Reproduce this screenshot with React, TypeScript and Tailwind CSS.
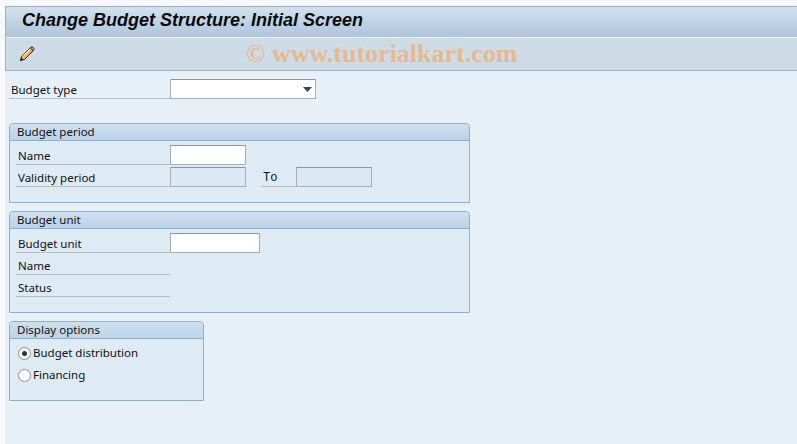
const ui = { fontFamily: '"Noto Sans", sans-serif' };

function Pencil() {
  return (
    <svg width="16" height="16" viewBox="0 0 16 16" className="block">
      <path d="M1.5 14.5 L2.6 10.4 L11.6 1.6 L14.4 4.4 L5.6 13.4 Z" fill="#f4b942" stroke="#1a1a1a" strokeWidth="1" strokeLinejoin="round" />
      <path d="M3.6 10.4 L12 2.4" stroke="#fff3c4" strokeWidth="1.2" />
      <path d="M11.2 2 L12.2 1 Q13 0.6 13.8 1.2 L14.9 2.3 Q15.4 3 14.9 3.8 L14 4.8 Z" fill="#d9808c" stroke="#1a1a1a" strokeWidth="0.8" />
      <path d="M1.5 14.5 L2.2 11.8 L4.2 13.8 Z" fill="#1a1a1a" />
    </svg>
  );
}

function Row({ label, width = "w-[154px]", children }: { label: string; width?: string; children?: React.ReactNode }) {
  return (
    <div className="flex h-[20px] mb-[2px] items-stretch">
      <div className={`${width} border-b border-[#b9bdc1] pl-[2px] text-[11.5px] leading-[22px] text-[#111] h-[20px]`}>{label}</div>
      {children}
    </div>
  );
}

function Field({ width, disabled }: { width: string; disabled?: boolean }) {
  return (
    <div className={`${width} h-[20px] border border-[#a9adb0] border-t-[#8f9496] rounded-[1px] ${disabled ? "bg-[#dce8f3]" : "bg-white"}`} />
  );
}

function Group({ title, width, height, children }: { title: string; width: string; height: string; children: React.ReactNode }) {
  return (
    <section className={`${width} ${height} border border-[#8fb0cb] rounded-t-[4px] bg-[#deeaf4] overflow-hidden flex flex-col`}>
      <div className="h-[17px] shrink-0 border-b border-[#8fb0cb] bg-gradient-to-b from-[#cfdfee] to-[#bcd3e8] pl-[7px] text-[11.5px] leading-[15px] text-[#111]">{title}</div>
      <div className="pt-[4px] pl-[6px]">{children}</div>
    </section>
  );
}

function Radio({ on, label }: { on?: boolean; label: string }) {
  return (
    <div className="flex h-[20px] mb-[2px] items-center">
      <div className="w-[13px] h-[13px] rounded-full border border-[#8e8f8f] bg-white flex items-center justify-center">
        {on && <div className="w-[5px] h-[5px] rounded-full bg-[#2c3040]" />}
      </div>
      <span className="ml-[2px] text-[11.5px] leading-[22px] text-[#111]">{label}</span>
    </div>
  );
}

export default function App() {
  return (
    <div className="w-[797px] h-[444px] overflow-hidden bg-[#f8f9fd] pt-[6px] pl-[5px] flex flex-col" style={ui}>
      <header className="h-[31px] shrink-0 border-t border-[#a1afc3] border-l bg-gradient-to-b from-[#d2e1ee] to-[#aec5dc] pl-[16px] text-[18px] leading-[26px] font-bold italic text-[#0a0a0a]" style={{ fontFamily: '"Liberation Sans", sans-serif' }}>
        Change Budget Structure: Initial Screen
      </header>
      <div className="h-[34px] shrink-0 border-t border-[#eef3f8] border-b border-l border-b-[#a3b3c6] border-l-[#a1afc3] bg-[#cddbe6] flex items-center">
        <div className="ml-[13px]"><Pencil /></div>
        <div className="ml-[211px] text-[26px] font-bold leading-[30px] text-[#e8b98c] whitespace-nowrap" style={{ fontFamily: '"Liberation Serif", serif' }}>
          © www.tutorialkart.com
        </div>
      </div>
      <main className="flex-1 bg-[#e8f0f7] pl-[4px] pt-[8px]">
        <div className="flex h-[20px] items-stretch">
          <div className="w-[161px] border-b border-[#b9bdc1] pl-[2px] text-[11.5px] leading-[21px] text-[#111]">Budget type</div>
          <div className="relative w-[146px] h-[20px] border border-[#a9adb0] border-t-[#8f9496] rounded-[1px] bg-white">
            <svg width="9" height="5" viewBox="0 0 9 5" className="absolute right-[3px] top-[7px]">
              <path d="M0 0 H9 L4.5 5 Z" fill="#2f4468" />
            </svg>
          </div>
        </div>
        <div className="mt-[24px] flex flex-col gap-[8px]">
          <Group title="Budget period" width="w-[461px]" height="h-[80px]">
            <Row label="Name"><Field width="w-[76px]" /></Row>
            <Row label="Validity period">
              <Field width="w-[76px]" disabled />
              <div className="ml-[15px] w-[35px] border-b border-[#b9bdc1] pl-[2px] h-[20px] text-[12px] leading-[22px] text-[#111]" style={{ fontFamily: '"Liberation Mono", monospace' }}>To</div>
              <Field width="w-[76px]" disabled />
            </Row>
          </Group>
          <Group title="Budget unit" width="w-[461px]" height="h-[102px]">
            <Row label="Budget unit"><Field width="w-[90px]" /></Row>
            <Row label="Name" />
            <Row label="Status" />
          </Group>
          <Group title="Display options" width="w-[195px]" height="h-[80px]">
            <div className="ml-[2px]">
              <Radio on label="Budget distribution" />
              <Radio label="Financing" />
            </div>
          </Group>
        </div>
      </main>
    </div>
  );
}
